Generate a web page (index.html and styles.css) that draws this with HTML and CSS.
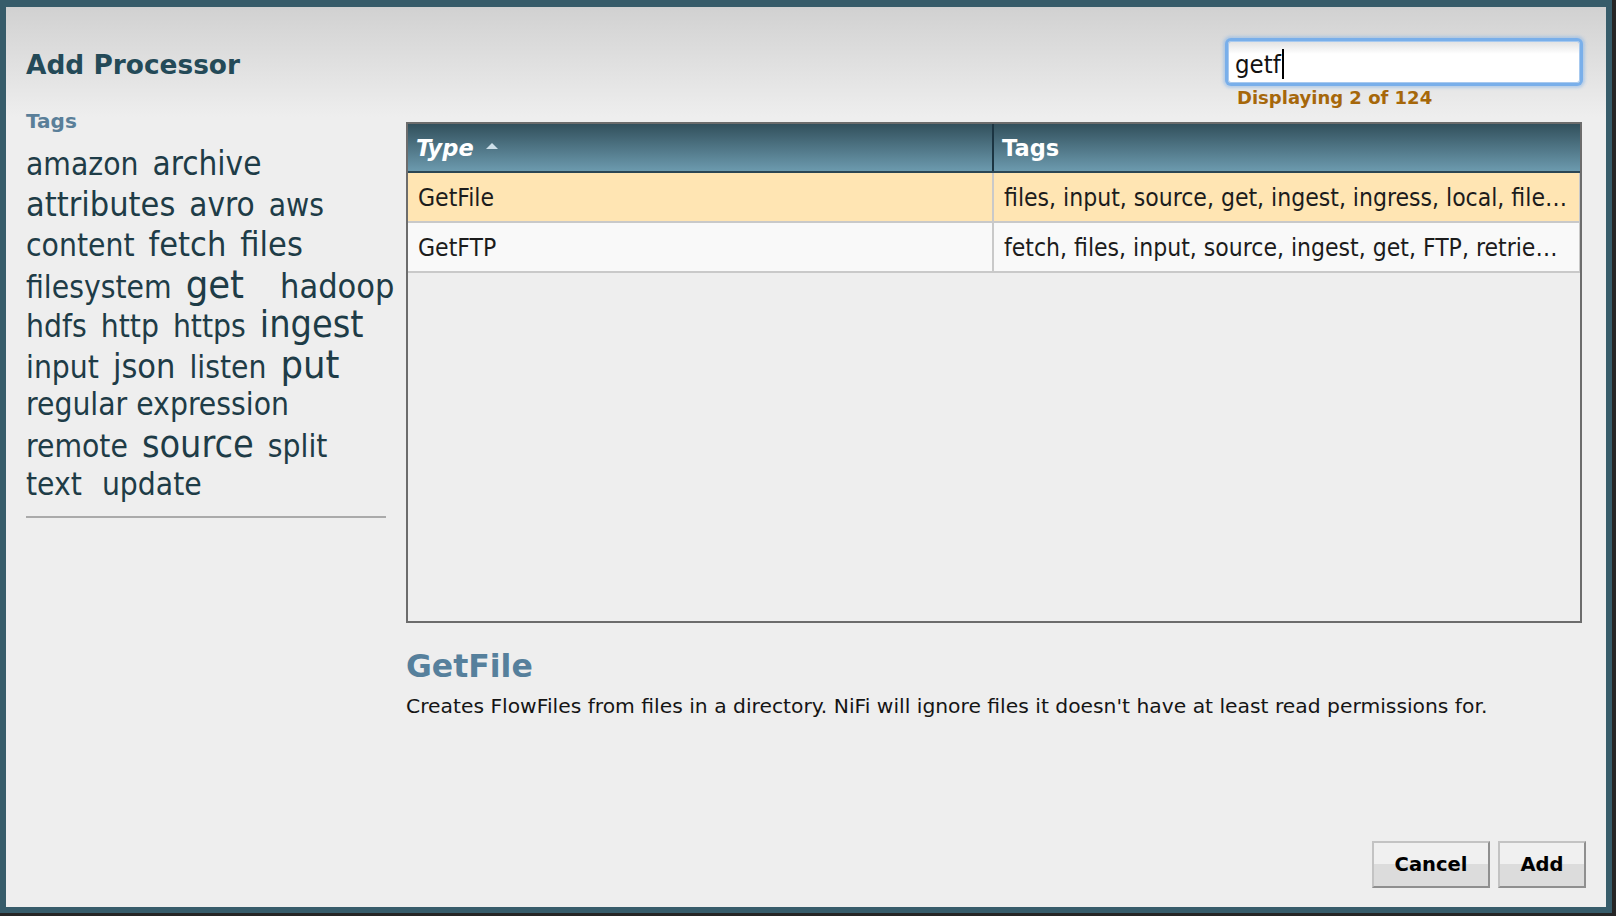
FILE: index.html
```html
<!DOCTYPE html>
<html>
<head>
<meta charset="utf-8">
<title>Add Processor</title>
<link rel="stylesheet" href="styles.css">
</head>
<body>
<div class="dialog">
  <header class="dialog-header">
    <h1 class="dialog-title">Add Processor</h1>
    <div class="search">
      <div class="search-field"><span class="search-text">getf</span><span class="caret"></span></div>
      <div class="search-count">Displaying 2 of 124</div>
    </div>
  </header>

  <div class="dialog-body">
    <aside class="tag-panel">
      <div class="tag-label">Tags</div>
      <div class="tag-cloud">
        <div class="cloud-row"><span class="tag t1">amazon</span><span class="tag t2">archive</span></div>
        <div class="cloud-row"><span class="tag t3">attributes</span><span class="tag t2">avro</span><span class="tag t1">aws</span></div>
        <div class="cloud-row"><span class="tag t1">content</span><span class="tag t3">fetch</span><span class="tag t3">files</span></div>
        <div class="cloud-row"><span class="tag t1">filesystem</span><span class="tag t5 spaced">get</span><span class="tag t3">hadoop</span></div>
        <div class="cloud-row"><span class="tag t1">hdfs</span><span class="tag t1">http</span><span class="tag t1">https</span><span class="tag t4">ingest</span></div>
        <div class="cloud-row"><span class="tag t1">input</span><span class="tag t3">json</span><span class="tag t1">listen</span><span class="tag t5">put</span></div>
        <div class="cloud-row"><span class="tag t1">regular expression</span></div>
        <div class="cloud-row"><span class="tag t1">remote</span><span class="tag t4">source</span><span class="tag t1">split</span></div>
        <div class="cloud-row"><span class="tag t1 loose">text</span><span class="tag t1">update</span></div>
      </div>
      <div class="tag-sep"></div>
    </aside>

    <section class="main">
      <div class="grid">
        <div class="grid-head">
          <div class="cell col-type"><span class="head-type">Type</span><span class="sort-arrow"></span></div>
          <div class="cell col-tags">Tags</div>
        </div>
        <div class="grid-row selected">
          <div class="cell col-type">GetFile</div>
          <div class="cell col-tags"><span class="clip">files, input, source, get, ingest, ingress, local, filesystem</span></div>
        </div>
        <div class="grid-row">
          <div class="cell col-type">GetFTP</div>
          <div class="cell col-tags"><span class="clip">fetch, files, input, source, ingest, get, FTP, retrieve, remote</span></div>
        </div>
      </div>
      <h2 class="desc-title">GetFile</h2>
      <p class="desc-text">Creates FlowFiles from files in a directory. NiFi will ignore files it doesn't have at least read permissions for.</p>
    </section>
  </div>

  <footer class="dialog-footer">
    <button class="btn btn-cancel">Cancel</button>
    <button class="btn btn-add">Add</button>
  </footer>
</div>
</body>
</html>
```

FILE: styles.css
```css
html, body {
  margin: 0;
  padding: 0;
}

body {
  width: 1616px;
  height: 916px;
  overflow: hidden;
  background: #262626;
  font-family: "DejaVu Sans Condensed", "DejaVu Sans", sans-serif;
  font-stretch: condensed;
}

.dialog {
  box-sizing: border-box;
  width: 1612px;
  height: 913px;
  border: 6px solid #375c6a;
  border-top-width: 7px;
  background: linear-gradient(#d1d1d1 0, #eeeeee 110px, #eeeeee 100%);
  display: flex;
  flex-direction: column;
}

/* ---------- header ---------- */
.dialog-header {
  height: 99px;
  box-sizing: border-box;
  padding: 34px 26px 0 20px;
  display: flex;
  justify-content: space-between;
  align-items: flex-start;
  flex: none;
}

.dialog-title {
  margin: 9px 0 0;
  font-family: "DejaVu Sans", sans-serif;
  font-stretch: normal;
  font-size: 26.4px;
  line-height: 30px;
  font-weight: bold;
  color: #244a58;
}

.search {
  width: 352px;
}

.search-field {
  height: 42px;
  box-sizing: border-box;
  border: 1px solid #a7c9ef;
  border-radius: 3px;
  background: linear-gradient(#e3e3e3 0, #ffffff 12px, #ffffff 100%);
  box-shadow: 0 0 0 3px #79afea, 0 0 3px 5px rgba(121, 175, 234, 0.45);
  padding: 3px 0 0 6px;
  display: flex;
  align-items: center;
  font-size: 25.5px;
  color: #111;
}

.caret {
  width: 2px;
  height: 30px;
  margin-left: 1px;
  background: #000;
}

.search-count {
  margin-top: 5px;
  padding-left: 9px;
  font-family: "DejaVu Sans", sans-serif;
  font-stretch: normal;
  font-size: 18px;
  line-height: 20px;
  font-weight: bold;
  color: #a6670a;
}

/* ---------- body ---------- */
.dialog-body {
  flex: 1;
  display: flex;
  padding: 0 24px 0 20px;
  min-height: 0;
}

.tag-panel {
  width: 360px;
  flex: none;
  padding-top: 3px;
}

.tag-label {
  font-family: "DejaVu Sans", sans-serif;
  font-stretch: normal;
  font-size: 20px;
  line-height: 24px;
  font-weight: bold;
  color: #5a7f99;
}

.tag-cloud {
  margin-top: 12px;
  color: #1e3c47;
}

.cloud-row {
  height: 40px;
  box-sizing: border-box;
  padding-top: 2px;
  display: flex;
  align-items: baseline;
  gap: 14px;
  white-space: nowrap;
}

.tag {
  line-height: 34px;
}

.tag.spaced {
  margin-right: 22px;
}

.tag.loose {
  margin-right: 6px;
}

.t1 { font-size: 31.5px; }
.t2 { font-size: 33px; }
.t3 { font-size: 34px; }
.t4 { font-size: 37.5px; }
.t5 { font-size: 39.5px; }

.tag-sep {
  margin-top: 11px;
  height: 2px;
  background: #aaaaaa;
}

.main {
  flex: 1;
  min-width: 0;
  margin-left: 20px;
  padding-top: 16px;
}

/* ---------- grid ---------- */
.grid {
  height: 501px;
  box-sizing: border-box;
  border: 2px solid #6c6c6c;
  background: #eeeeee;
}

.grid-head {
  height: 49px;
  box-sizing: border-box;
  display: flex;
  border-bottom: 2px solid #2b4653;
  background: linear-gradient(#32505c, #6c9aae);
  color: #fff;
  font-family: "DejaVu Sans", sans-serif;
  font-stretch: normal;
  font-weight: bold;
  font-size: 22.5px;
}

.grid-head .cell {
  padding-left: 8px;
}

.grid-head .col-type {
  border-right-color: #1c3542;
}

.head-type {
  font-style: italic;
}

.sort-arrow {
  display: inline-block;
  width: 0;
  height: 0;
  margin-left: 12px;
  border-left: 6px solid transparent;
  border-right: 6px solid transparent;
  border-bottom: 6px solid #cddfe9;
  position: relative;
  top: -2px;
}

.grid-row {
  height: 50px;
  box-sizing: border-box;
  display: flex;
  border-bottom: 2px solid #c9c9c9;
  border-right: 1px solid #c9c9c9;
  background: #f9f9f9;
  font-size: 24.5px;
  color: #1c1c1c;
}

.grid-row.selected {
  background: #ffe5b3;
}

.cell {
  display: flex;
  align-items: center;
  min-width: 0;
  padding-left: 10px;
  padding-right: 10px;
  box-sizing: border-box;
}

.col-type {
  width: 586px;
  flex: none;
  border-right: 2px solid #c9c9c9;
}

.col-tags {
  flex: 1;
}

.clip {
  display: block;
  min-width: 0;
  overflow: hidden;
  white-space: nowrap;
  text-overflow: ellipsis;
}

/* ---------- description ---------- */
.desc-title {
  margin: 25px 0 0;
  font-family: "DejaVu Sans", sans-serif;
  font-stretch: normal;
  font-size: 31.5px;
  line-height: 36px;
  font-weight: bold;
  color: #56809c;
}

.desc-text {
  margin: 10px 0 0;
  font-family: "DejaVu Sans", sans-serif;
  font-stretch: normal;
  font-size: 20.3px;
  line-height: 24px;
  color: #151515;
}

/* ---------- footer ---------- */
.dialog-footer {
  height: 66px;
  box-sizing: border-box;
  flex: none;
  display: flex;
  justify-content: flex-end;
  align-items: flex-start;
  gap: 8px;
  padding-right: 20px;
}

.btn {
  height: 47px;
  box-sizing: border-box;
  padding: 0;
  border: 2px solid;
  border-color: #c3c3c3 #8f8f8f #8f8f8f #c3c3c3;
  background: linear-gradient(#f0f0f0 0, #f0f0f0 50%, #dcdcdc 50%, #dcdcdc 100%);
  font-family: "DejaVu Sans", sans-serif;
  font-stretch: normal;
  font-size: 19.5px;
  font-weight: bold;
  color: #000;
}

.btn-cancel {
  width: 118px;
}

.btn-add {
  width: 88px;
}
```
